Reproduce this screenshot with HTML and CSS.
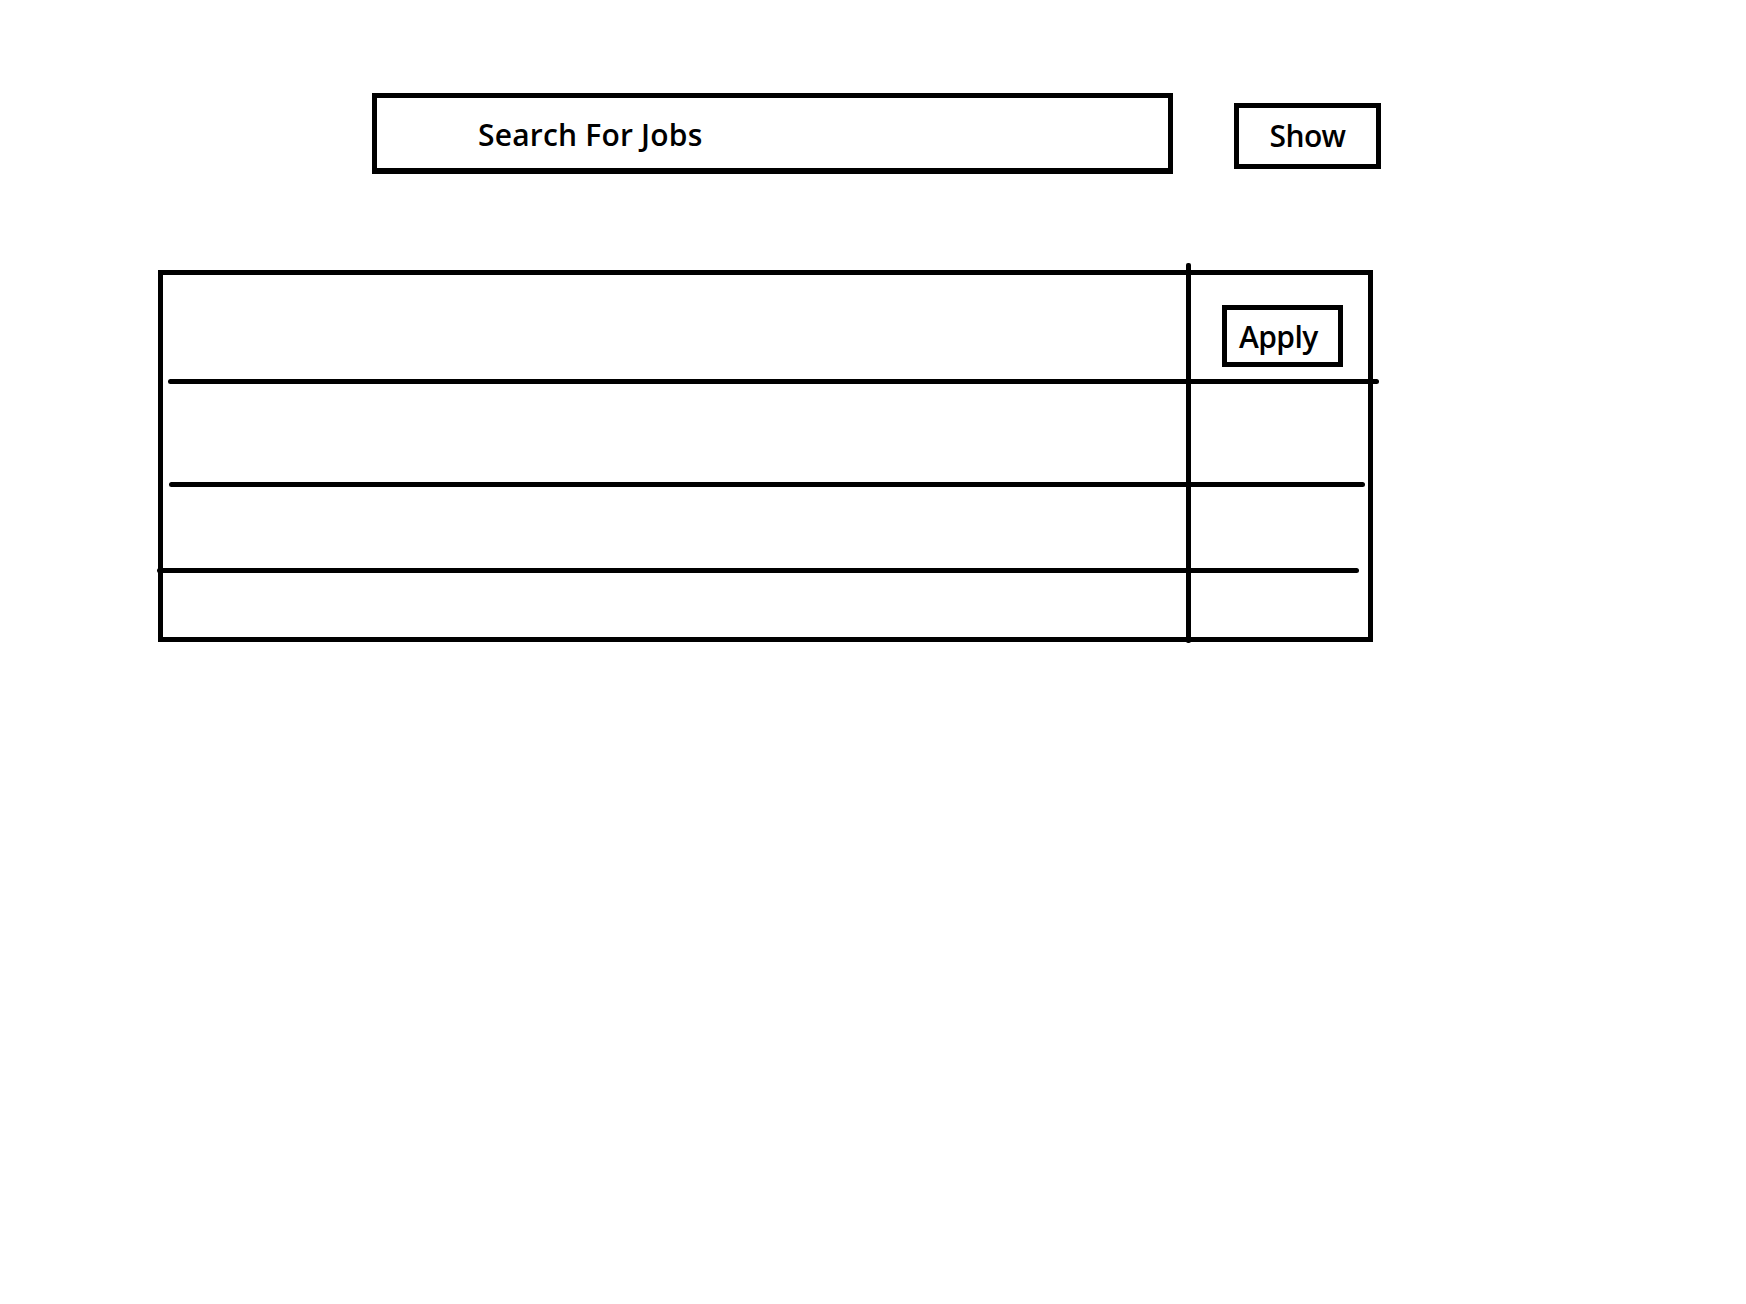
FILE: index.html
```html
<!DOCTYPE html>
<html lang="en">
<head>
<meta charset="utf-8">
<title>Search For Jobs</title>
<link rel="stylesheet" href="styles.css">
</head>
<body>
  <header class="search-bar">
    <div class="search-box">Search For Jobs</div>
    <button class="show-btn" type="button">Show</button>
  </header>
  <section class="jobs-table">
    <div class="col-divider"></div>
    <div class="row row-1">
      <div class="cell-main"></div>
      <div class="cell-action"><button class="apply-btn" type="button">Apply</button></div>
    </div>
    <div class="sep sep-1"></div>
    <div class="row row-2"></div>
    <div class="sep sep-2"></div>
    <div class="row row-3"></div>
    <div class="sep sep-3"></div>
    <div class="row row-4"></div>
  </section>
</body>
</html>
```

FILE: styles.css
```css
* { box-sizing: border-box; }

html, body {
  margin: 0;
  padding: 0;
  background: #ffffff;
}

body {
  font-family: "Open Sans", "DejaVu Sans", sans-serif;
  color: #000;
  width: 1746px;
  height: 1304px;
  overflow: hidden;
}

.search-bar {
  display: flex;
  align-items: flex-start;
  gap: 61px;
  padding: 93px 0 0 372px;
}

.search-box {
  width: 801px;
  height: 81px;
  border: 5px solid #000;
  border-bottom-width: 6px;
  padding: 17px 0 0 101px;
  font-size: 30px;
  line-height: 40px;
  font-weight: 600;
  letter-spacing: 0.2px;
}

.show-btn {
  margin-top: 10px;
  width: 147px;
  height: 66px;
  border: 5px solid #000;
  background: #fff;
  padding: 0 0 1px 0;
  font-family: inherit;
  font-size: 30px;
  line-height: 40px;
  font-weight: 600;
  letter-spacing: -0.6px;
  color: #000;
  text-align: center;
  display: block;
}

.jobs-table {
  position: relative;
  margin: 96px 0 0 158px;
  width: 1215px;
  border: 5px solid #000;
}

.col-divider {
  position: absolute;
  left: 1023px;
  top: -12px;
  width: 5px;
  height: 380px;
  background: #000;
  border-radius: 2px;
  z-index: 2;
}

.row-1 {
  display: grid;
  grid-template-columns: 1028px 1fr;
  height: 104px;
}

.cell-action {
  padding: 30px 0 0 31px;
}

.apply-btn {
  display: block;
  width: 121px;
  height: 62px;
  border: 5px solid #000;
  background: #fff;
  padding: 2px 0 0 12px;
  font-family: inherit;
  font-size: 30px;
  line-height: 40px;
  font-weight: 600;
  letter-spacing: -0.6px;
  color: #000;
  text-align: left;
}

.row-2 { height: 98px; }
.row-3 { height: 81px; }
.row-4 { height: 64px; }

.sep {
  height: 5px;
  background: #000;
  border-radius: 3px;
  position: relative;
  z-index: 1;
}

.sep-1 { margin: 0 -11px 0 5px; }
.sep-2 { margin: 0 3px 0 6px; }
.sep-3 { margin: 0 9px 0 -6px; }
```
